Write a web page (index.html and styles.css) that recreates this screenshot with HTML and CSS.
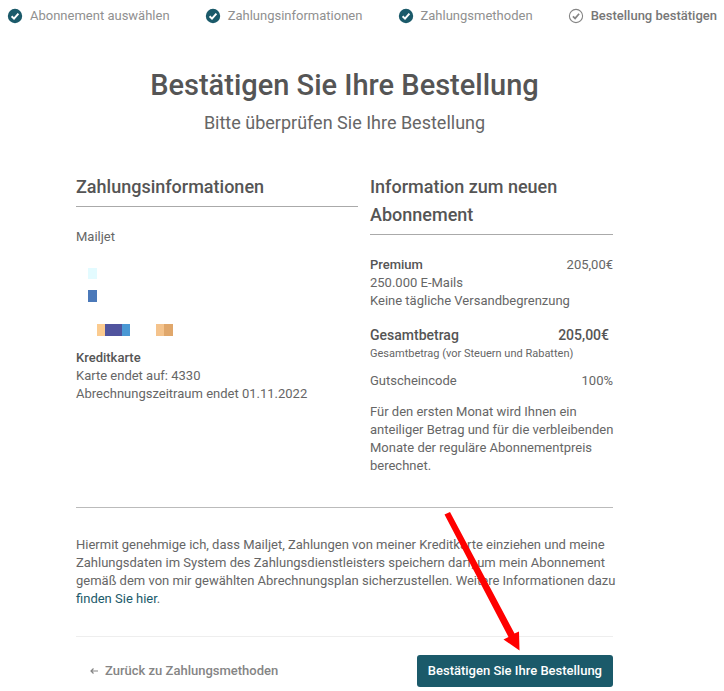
FILE: index.html
```html
<!DOCTYPE html>
<html lang="de">
<head>
<meta charset="utf-8">
<meta name="viewport" content="width=device-width, initial-scale=1">
<title>Bestätigen Sie Ihre Bestellung</title>
<link rel="stylesheet" href="styles.css">
</head>
<body>
<ol class="steps">
  <li class="step"><svg class="step-icon" viewBox="0 0 16 16" aria-hidden="true"><circle cx="8" cy="8" r="7.2" fill="#1b5a6a"/><path d="M4.6 8.3l2.4 2.3 4.4-5" fill="none" stroke="#fff" stroke-width="2"/></svg>Abonnement auswählen</li>
  <li class="step"><svg class="step-icon" viewBox="0 0 16 16" aria-hidden="true"><circle cx="8" cy="8" r="7.2" fill="#1b5a6a"/><path d="M4.6 8.3l2.4 2.3 4.4-5" fill="none" stroke="#fff" stroke-width="2"/></svg>Zahlungsinformationen</li>
  <li class="step"><svg class="step-icon" viewBox="0 0 16 16" aria-hidden="true"><circle cx="8" cy="8" r="7.2" fill="#1b5a6a"/><path d="M4.6 8.3l2.4 2.3 4.4-5" fill="none" stroke="#fff" stroke-width="2"/></svg>Zahlungsmethoden</li>
  <li class="step step-current" aria-current="step"><svg class="step-icon" viewBox="0 0 16 16" aria-hidden="true"><circle cx="8" cy="8" r="6.6" fill="none" stroke="#858585" stroke-width="1.1"/><path d="M4.9 8.3l2.2 2.1 4-4.6" fill="none" stroke="#858585" stroke-width="1.7"/></svg>Bestellung bestätigen</li>
</ol>
<main class="page">
  <header class="intro">
    <h1 class="title">Bestätigen Sie Ihre Bestellung</h1>
    <p class="subtitle">Bitte überprüfen Sie Ihre Bestellung</p>
  </header>
  <div class="columns">
    <section>
      <h2 class="heading">Zahlungsinformationen</h2>
      <p>Mailjet</p>
      <svg class="mosaic" viewBox="0 0 100 72" shape-rendering="crispEdges" aria-hidden="true">
        <rect x="12" y="0" width="9" height="11" fill="#e3fbff"/>
        <rect x="12" y="22" width="9" height="12" fill="#4b79b9"/>
        <rect x="21" y="56" width="8" height="12" fill="#fbcb8f"/>
        <rect x="29" y="56" width="17" height="12" fill="#50549e"/>
        <rect x="46" y="56" width="8" height="12" fill="#4a98d4"/>
        <rect x="80" y="56" width="8" height="12" fill="#f4c38c"/>
        <rect x="88" y="56" width="9" height="12" fill="#e0a76b"/>
      </svg>
      <h3 class="label">Kreditkarte</h3>
      <p>Karte endet auf: 4330</p>
      <p>Abrechnungszeitraum endet 01.11.2022</p>
    </section>
    <section>
      <h2 class="heading">Information zum neuen Abonnement</h2>
      <div class="row"><h3 class="label">Premium</h3><span>205,00€</span></div>
      <p>250.000 E-Mails</p>
      <p>Keine tägliche Versandbegrenzung</p>
      <div class="row total"><span>Gesamtbetrag</span><span>205,00€</span></div>
      <p class="fine">Gesamtbetrag (vor Steuern und Rabatten)</p>
      <div class="row coupon"><span>Gutscheincode</span><span>100%</span></div>
      <p class="copy">Für den ersten Monat wird Ihnen ein anteiliger Betrag und für die verbleibenden Monate der reguläre Abonnementpreis berechnet.</p>
    </section>
  </div>
  <div class="consent">
    <p class="copy">Hiermit genehmige ich, dass Mailjet, Zahlungen von meiner Kreditkarte einziehen und meine Zahlungsdaten im System des Zahlungsdienstleisters speichern darf, um mein Abonnement gemäß dem von mir gewählten Abrechnungsplan sicherzustellen. Weitere Informationen dazu <a class="link" href="#">finden Sie hier</a>.</p>
  </div>
  <div class="actions">
    <a class="back" href="#"><svg class="back-icon" viewBox="0 0 8 8" aria-hidden="true"><path d="M8 4H1M3.5 1.5L1 4l2.5 2.5" fill="none" stroke="#858585" stroke-width="1.2"/></svg>Zurück zu Zahlungsmethoden</a>
    <div class="confirm">
      <button class="button" type="button">Bestätigen Sie Ihre Bestellung</button>
      <svg class="pointer" viewBox="0 0 84 142" aria-hidden="true"><path d="M4.500 4.500L10 2 74.500 123.500 79 121.500 79.500 140.500 63.500 129.500 68.500 127Z" fill="#f00"/></svg>
    </div>
  </div>
</main>
</body>
</html>
```
FILE: styles.css
```css
* { box-sizing: border-box; }
body, h1, h2, h3, p, ol { margin: 0; padding: 0; }
body {
  background: #fff;
  color: #666;
  font: 13px/18px Roboto, "Liberation Sans", sans-serif;
}
.steps {
  display: flex;
  justify-content: space-between;
  padding: 7px 7px 0;
  list-style: none;
  color: #909090;
}
.step { display: flex; align-items: center; gap: 7px; white-space: nowrap; }
.step-icon { width: 16px; height: 16px; }
.step-current { color: #777; font-weight: 500; }
.page { padding: 40px 111px 0 76px; }
.intro { text-align: center; }
.title { color: #555; font-size: 29px; line-height: 40px; font-weight: 500; }
.subtitle { margin-top: 4px; font-size: 18px; line-height: 28px; }
.columns {
  display: grid;
  grid-template-columns: 282fr 243fr;
  gap: 12px;
  padding: 36px 0 32px;
  border-bottom: 1px solid #bbb;
}
.heading {
  margin-bottom: 21px;
  padding-bottom: 5px;
  border-bottom: 1px solid #aaa;
  color: #555;
  font-size: 18px;
  line-height: 28px;
  font-weight: 500;
}
.mosaic { display: block; width: 100px; height: 72px; margin: 22px 0 9px; }
.label { color: #555; font-size: 13px; font-weight: 500; }
.row { display: flex; justify-content: space-between; }
.total { margin-top: 15px; padding-right: 4px; color: #555; font-size: 14px; line-height: 20px; font-weight: 500; }
.fine { font-size: 11px; }
.coupon { margin: 9px 0 13px; }
.copy { margin-right: -8px; }
.consent { padding: 28px 0; border-bottom: 1px solid #eee; }
.link { color: #1b5a6a; text-decoration: none; }
.actions { display: flex; align-items: center; justify-content: space-between; padding: 18px 0 0 14px; }
.back { display: flex; align-items: center; gap: 7px; color: #858585; font-weight: 500; text-decoration: none; }
.back-icon { width: 8px; height: 8px; }
.confirm { position: relative; }
.button {
  padding: 7px 11px;
  border: 0;
  border-radius: 3px;
  background: #1b5a6a;
  color: #fff;
  font: 500 13px/18px Roboto, "Liberation Sans", sans-serif;
}
.pointer { position: absolute; right: 89px; bottom: 35px; width: 84px; height: 142px; pointer-events: none; }
```
